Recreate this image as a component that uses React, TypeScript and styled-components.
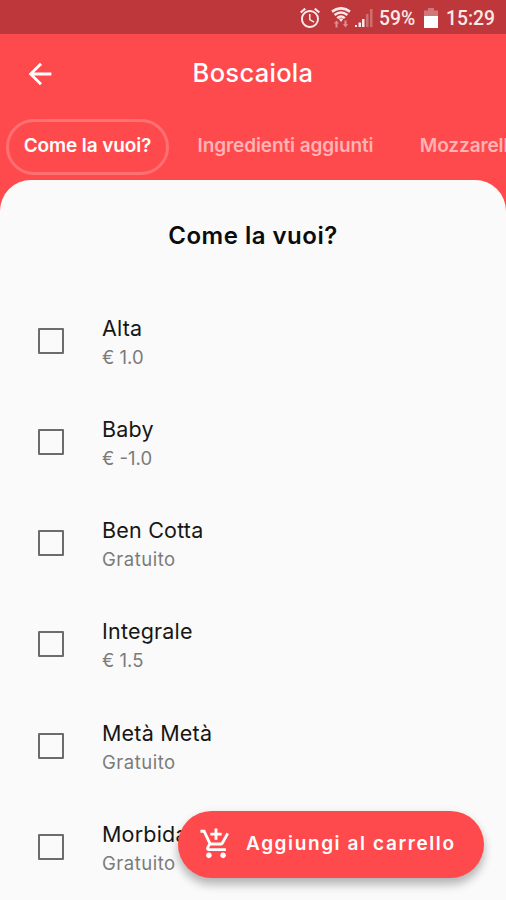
import React from "react";
import styled, { createGlobalStyle } from "styled-components";
import { MdAlarm, MdArrowBack, MdAddShoppingCart } from "react-icons/md";

const GlobalStyle = createGlobalStyle`
  *, *::before, *::after { box-sizing: border-box; }
  body { margin: 0; background: #fafafa; overflow: hidden; }
`;

const Screen = styled.div`
  position: relative;
  display: flex;
  flex-direction: column;
  height: 900px;
  overflow: hidden;
  background: #ff4a4d;
  font-family: Inter, "Liberation Sans", sans-serif;
`;

const StatusBar = styled.div`
  display: flex;
  align-items: center;
  justify-content: flex-end;
  flex: none;
  height: 34px;
  padding: 2px 11px 0 0;
  background: #be383b;
  color: #fbe9e9;
  font: 550 19.3px/1 Roboto, sans-serif;
`;

const StatusIcon = styled.span<{ $gap: number }>`
  display: flex;
  margin-right: ${(p) => p.$gap}px;
`;

const StatusText = styled.span<{ $width: number }>`
  width: ${(p) => p.$width}px;
  padding-top: 1px;
  white-space: nowrap;
`;

const Header = styled.header`
  display: grid;
  grid-template-columns: 80px 1fr 80px;
  align-items: center;
  flex: none;
  height: 79px;
  color: #fff;
`;

const BackButton = styled.button`
  display: flex;
  width: 34px;
  margin-left: 23px;
  padding: 0;
  border: 0;
  background: none;
  color: inherit;
`;

const PageTitle = styled.h1`
  margin: 0;
  padding-bottom: 2px;
  text-align: center;
  font-size: 25.5px;
  font-weight: 550;
  letter-spacing: 0.3px;
`;

const Tabs = styled.nav`
  display: flex;
  align-items: center;
  flex: none;
  height: 67px;
  padding: 0 0 0 6px;
`;

const Tab = styled.button<{ $active?: boolean; $width: number }>`
  flex: none;
  width: ${(p) => p.$width}px;
  height: 56px;
  padding: 0 0 3px;
  border: 3px solid ${(p) => (p.$active ? "#ff7072" : "transparent")};
  border-radius: 28px;
  background: none;
  color: ${(p) => (p.$active ? "#fff" : "#ffb3b4")};
  font: 600 19px/1 Inter, sans-serif;
  letter-spacing: -0.1px;
  white-space: nowrap;
`;

const Sheet = styled.main`
  flex: 1;
  min-height: 0;
  overflow: hidden;
  border-radius: 31px 31px 0 0;
  background: #fafafa;
`;

const SheetTitle = styled.h2`
  margin: 0;
  padding-top: 40px;
  height: 110px;
  text-align: center;
  color: #0c0c0c;
  font-size: 24px;
  line-height: 32px;
  font-weight: 600;
  letter-spacing: 0.5px;
`;

const Options = styled.ul`
  margin: 0;
  padding: 0;
  list-style: none;
`;

const Option = styled.li`
  display: flex;
  align-items: center;
  height: 101.25px;
  padding-left: 38px;
`;

const Checkbox = styled.span`
  flex: none;
  width: 26px;
  height: 26px;
  margin-right: 38px;
  border: 2px solid #6c6c6c;
  border-radius: 1px;
`;

const OptionText = styled.div`
  display: flex;
  flex-direction: column;
  padding-top: 2px;
`;

const Name = styled.span`
  color: #161616;
  font-size: 21.5px;
  line-height: 30px;
  letter-spacing: 0.2px;
`;

const Price = styled.span<{ $free: boolean }>`
  color: #7b7b7b;
  font-size: 18.5px;
  line-height: 28px;
  letter-spacing: ${(p) => (p.$free ? 0.5 : 0)}px;
`;

const CartButton = styled.button`
  position: absolute;
  left: 178px;
  top: 811px;
  display: flex;
  align-items: center;
  width: 306px;
  height: 67px;
  padding: 0 0 2px 21px;
  border: 0;
  border-radius: 34px;
  background: #ff4a4d;
  color: #fff;
  box-shadow: 0 7px 10px rgba(0, 0, 0, 0.24), 0 2px 10px rgba(0, 0, 0, 0.08);
  font: 600 19px/1 Inter, sans-serif;
  letter-spacing: 1.6px;
  white-space: nowrap;
`;

const CartLabel = styled.span`
  margin-left: 13px;
`;

const WifiIcon = () => (
  <svg width="20" height="22" viewBox="0 0 20 22" fill="none" stroke="#fbe9e9">
    <path d="M1 4.6Q10-2 19 4.6" strokeWidth="2.6" />
    <path d="M3.6 8Q10 3 16.4 8" strokeWidth="2.6" />
    <path d="M6.2 11.2Q10 8 13.8 11.2" strokeWidth="2.4" />
    <path d="M7.500 11.500h5L10 15z" fill="#fbe9e9" stroke="none" />
    <path d="M3 16.500 5.500 13.500 8 16.500H6.500V20.500h-2v-4zM12 17h1.500v-3.500h2V17H17l-2.500 3.500z" fill="#dc9092" stroke="none" />
  </svg>
);

const SignalIcon = () => (
  <svg width="18" height="18" viewBox="0 0 18 18">
    <path d="M0 16h2v2H0zM3.500 13.500h2.500V18h-2.500zM7 10h2.500v8H7z" fill="#fbe9e9" />
    <path d="M11 5h2.500v13h-2.500zM15 0h2.500v18h-2.500z" fill="#cf6e70" />
  </svg>
);

const BatteryIcon = () => (
  <svg width="14" height="20" viewBox="0 0 14 20">
    <path d="M4 0h6v2.500h4V8H0V2.500h4z" fill="#d27779" />
    <path d="M0 8h14v12H0z" fill="#fff" />
  </svg>
);

const options = [
  { name: "Alta", price: "€ 1.0" },
  { name: "Baby", price: "€ -1.0" },
  { name: "Ben Cotta", price: "Gratuito" },
  { name: "Integrale", price: "€ 1.5" },
  { name: "Metà Metà", price: "Gratuito" },
  { name: "Morbida", price: "Gratuito" },
];

export default function App() {
  return (
    <Screen>
      <GlobalStyle />
      <StatusBar>
        <StatusIcon $gap={9}><MdAlarm size={24} /></StatusIcon>
        <StatusIcon $gap={4}><WifiIcon /></StatusIcon>
        <StatusIcon $gap={6}><SignalIcon /></StatusIcon>
        <StatusText $width={45}>59%</StatusText>
        <StatusIcon $gap={8}><BatteryIcon /></StatusIcon>
        <StatusText $width={49}>15:29</StatusText>
      </StatusBar>
      <Header>
        <BackButton aria-label="Indietro"><MdArrowBack size={34} /></BackButton>
        <PageTitle>Boscaiola</PageTitle>
      </Header>
      <Tabs>
        <Tab $active $width={163}>Come la vuoi?</Tab>
        <Tab $width={233}>Ingredienti aggiunti</Tab>
        <Tab $width={135}>Mozzarella</Tab>
      </Tabs>
      <Sheet>
        <SheetTitle>Come la vuoi?</SheetTitle>
        <Options>
          {options.map((o) => (
            <Option key={o.name}>
              <Checkbox />
              <OptionText>
                <Name>{o.name}</Name>
                <Price $free={o.price === "Gratuito"}>{o.price}</Price>
              </OptionText>
            </Option>
          ))}
        </Options>
      </Sheet>
      <CartButton>
        <MdAddShoppingCart size={34} />
        <CartLabel>Aggiungi al carrello</CartLabel>
      </CartButton>
    </Screen>
  );
}
